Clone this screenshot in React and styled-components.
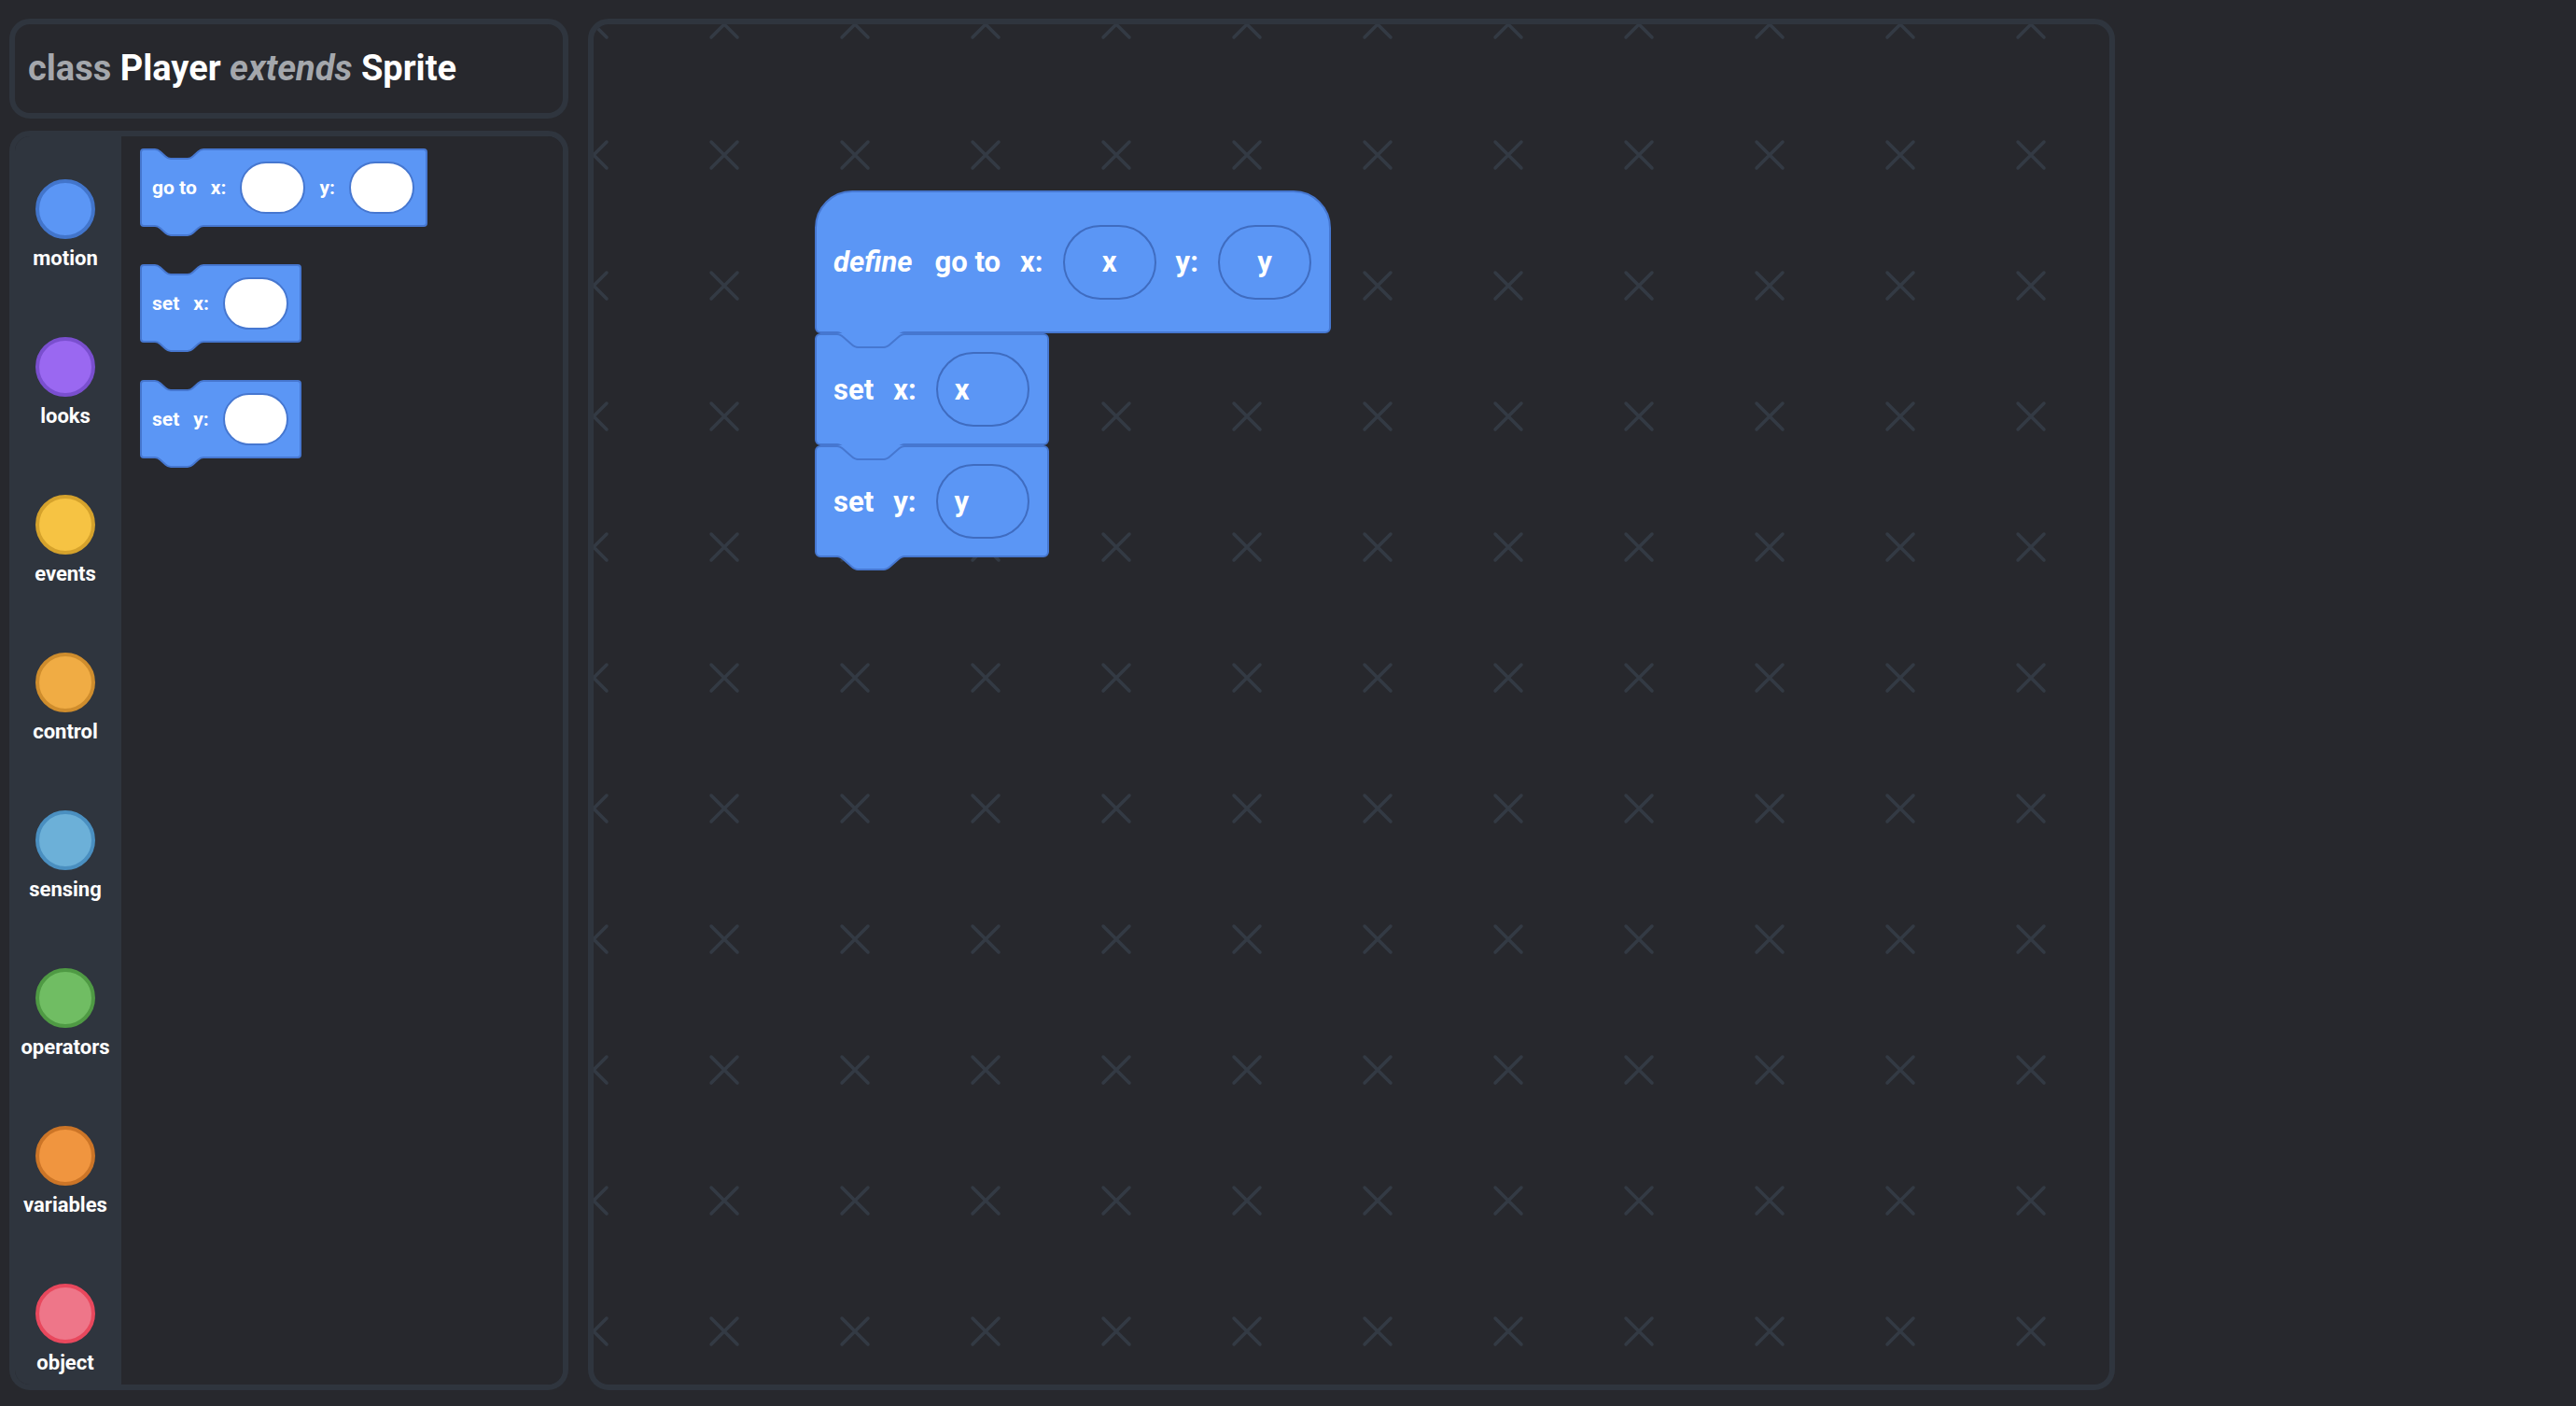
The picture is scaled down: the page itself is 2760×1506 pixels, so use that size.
import React from "react";
import styled, { createGlobalStyle } from "styled-components";

const BG = "#27282d";
const EDGE = "#2f353e";
const BLOCK = "#5b96f5";
const BLOCK_EDGE = "#4677d0";

const SIZES = {
  lg: { font: 31, gap: 21, padX: 18, padY: 18, ovalW: 100, ovalH: 80, radius: 6, notch: { x: 27, slant: 16, w: 66, d: 14 } },
  sm: { font: 21, gap: 15, padX: 11, padY: 12, ovalW: 70, ovalH: 56, radius: 4, notch: { x: 19, slant: 11, w: 46, d: 10 } },
};

const categories = [
  { name: "motion", fill: "#5b96f5", edge: "#4275cb" },
  { name: "looks", fill: "#9a68f1", edge: "#7a4fcf" },
  { name: "events", fill: "#f6c343", edge: "#d5a22c" },
  { name: "control", fill: "#f0ac44", edge: "#cf8d2d" },
  { name: "sensing", fill: "#6cb0d8", edge: "#4a8fc0" },
  { name: "operators", fill: "#70bd63", edge: "#4f9a44" },
  { name: "variables", fill: "#f0953f", edge: "#cc7527" },
  { name: "object", fill: "#ee7689", edge: "#e8485d" },
];

const GlobalStyle = createGlobalStyle`
  html, body {
    margin: 0;
    padding: 0;
    background: ${BG};
  }
  body {
    font-family: Roboto, "Liberation Sans", Arial, sans-serif;
    color: #fff;
  }
  * {
    box-sizing: border-box;
  }
`;

// notch / tab outline with rounded corners
const notchPath = (size) => {
  const n = SIZES[size].notch;
  const a = n.x;
  const b = n.x + n.slant;
  const c = n.x + n.w - n.slant;
  const d = n.x + n.w;
  const y0 = 1;
  const y1 = n.d + 1;
  const r = 3;
  const t = 0.25;
  const lerp = (p, q, k) => p + (q - p) * k;
  return [
    `M${a - r} ${y0}`,
    `Q${a} ${y0} ${lerp(a, b, t)} ${lerp(y0, y1, t)}`,
    `L${lerp(a, b, 1 - t)} ${lerp(y0, y1, 1 - t)}`,
    `Q${b} ${y1} ${b + r} ${y1}`,
    `L${c - r} ${y1}`,
    `Q${c} ${y1} ${lerp(c, d, t)} ${lerp(y1, y0, t)}`,
    `L${lerp(c, d, 1 - t)} ${lerp(y1, y0, 1 - t)}`,
    `Q${d} ${y0} ${d + r} ${y0}`,
  ].join(" ");
};

const Notch = ({ size, fill, bottom }) => {
  const n = SIZES[size].notch;
  const outline = notchPath(size);
  const right = n.x + n.w + 3;
  return (
    <NotchSvg $bottom={bottom} width={right + 2} height={n.d + 4}>
      <path d={`${outline} L${right} 0 L${n.x - 3} 0 Z`} fill={fill} />
      <path d={outline} fill="none" stroke={BLOCK_EDGE} strokeWidth="2" strokeLinejoin="round" />
    </NotchSvg>
  );
};

const Block = ({ size = "sm", hat, notchFill, children }) => (
  <BlockBody $size={size} $hat={hat}>
    {!hat && <Notch size={size} fill={notchFill} />}
    {children}
    <Notch size={size} fill={BLOCK} bottom />
  </BlockBody>
);

const App = () => {
  return (
    <>
      <GlobalStyle />
      <Page>
        <LeftColumn>
          <TitlePanel>
            <Keyword>class</Keyword>&nbsp;Player&nbsp;<Keyword $italic>extends</Keyword>&nbsp;Sprite
          </TitlePanel>

          <PalettePanel>
            <Sidebar>
              {categories.map((c) => (
                <Category key={c.name}>
                  <Dot $fill={c.fill} $edge={c.edge} />
                  <CategoryName>{c.name}</CategoryName>
                </Category>
              ))}
            </Sidebar>

            <BlockList>
              <Block notchFill={BG}>
                <Label $size="sm">go to</Label>
                <Label $size="sm">x:</Label>
                <Slot $size="sm" />
                <Label $size="sm">y:</Label>
                <Slot $size="sm" />
              </Block>
              <Block notchFill={BG}>
                <Label $size="sm">set</Label>
                <Label $size="sm">x:</Label>
                <Slot $size="sm" />
              </Block>
              <Block notchFill={BG}>
                <Label $size="sm">set</Label>
                <Label $size="sm">y:</Label>
                <Slot $size="sm" />
              </Block>
            </BlockList>
          </PalettePanel>
        </LeftColumn>

        <Canvas>
          <GridSvg>
            <defs>
              <pattern id="cross" width="140" height="140" x="-70" y="-70" patternUnits="userSpaceOnUse">
                <path d="M56 56 L84 84 M84 56 L56 84" stroke="#333a44" strokeWidth="3.4" strokeLinecap="round" />
              </pattern>
            </defs>
            <rect width="100%" height="100%" fill="url(#cross)" />
          </GridSvg>

          <Script style={{ left: 237, top: 178 }}>
            <Block size="lg" hat>
              <Label $size="lg" $italic>define</Label>
              <Label $size="lg">go to</Label>
              <Label $size="lg">x:</Label>
              <Param $size="lg" $center>x</Param>
              <Label $size="lg">y:</Label>
              <Param $size="lg" $center>y</Param>
            </Block>
            <Block size="lg" notchFill={BLOCK}>
              <Label $size="lg">set</Label>
              <Label $size="lg">x:</Label>
              <Param $size="lg">x</Param>
            </Block>
            <Block size="lg" notchFill={BLOCK}>
              <Label $size="lg">set</Label>
              <Label $size="lg">y:</Label>
              <Param $size="lg">y</Param>
            </Block>
          </Script>
        </Canvas>
      </Page>
    </>
  );
};

export default App;

const Page = styled.div`
  display: flex;
  gap: 21px;
  height: 100vh;
  padding: 20px 10px 17px;
`;

const LeftColumn = styled.div`
  width: 599px;
  display: flex;
  flex-direction: column;
  gap: 13px;
`;

const TitlePanel = styled.div`
  height: 107px;
  display: flex;
  align-items: center;
  padding: 0 14px 2px;
  border: 6px solid ${EDGE};
  border-radius: 22px;
  font-size: 38px;
  font-weight: 700;
  color: #ffffff;
  white-space: nowrap;
`;

const Keyword = styled.span`
  color: #a4a7ac;
  font-style: ${(p) => (p.$italic ? "italic" : "normal")};
`;

const PalettePanel = styled.div`
  flex: 1;
  display: flex;
  border: 6px solid ${EDGE};
  border-radius: 22px;
  overflow: hidden;
`;

const Sidebar = styled.div`
  width: 114px;
  flex-shrink: 0;
  background: ${EDGE};
  padding: 46px 6px 0 0;
  display: flex;
  flex-direction: column;
  align-items: center;
  gap: 71px;
`;

const Category = styled.div`
  display: flex;
  flex-direction: column;
  align-items: center;
  gap: 8px;
`;

const Dot = styled.div`
  width: 64px;
  height: 64px;
  border-radius: 50%;
  background: ${(p) => p.$fill};
  border: 4px solid ${(p) => p.$edge};
`;

const CategoryName = styled.div`
  font-size: 22px;
  line-height: 26px;
  font-weight: 700;
  color: #ffffff;
`;

const BlockList = styled.div`
  flex: 1;
  background: ${BG};
  padding: 13px 20px;
  display: flex;
  flex-direction: column;
  align-items: flex-start;
  gap: 40px;
`;

const Canvas = styled.div`
  width: 1636px;
  position: relative;
  border: 6px solid ${EDGE};
  border-radius: 22px;
  overflow: hidden;
  background: ${BG};
`;

const GridSvg = styled.svg`
  position: absolute;
  inset: 0;
  width: 100%;
  height: 100%;
`;

const Script = styled.div`
  position: absolute;
  display: flex;
  flex-direction: column;
  align-items: flex-start;
`;

const BlockBody = styled.div`
  position: relative;
  display: flex;
  align-items: center;
  gap: ${(p) => SIZES[p.$size].gap}px;
  padding: ${(p) => SIZES[p.$size].padY}px ${(p) => SIZES[p.$size].padX + 1}px
    ${(p) => SIZES[p.$size].padY}px ${(p) => SIZES[p.$size].padX}px;
  min-height: ${(p) => (p.$hat ? "153px" : "auto")};
  background: ${BLOCK};
  border: 2px solid ${BLOCK_EDGE};
  border-radius: ${(p) => (p.$hat ? "40px 40px 6px 6px" : `${SIZES[p.$size].radius}px`)};
  color: #ffffff;
  white-space: nowrap;
`;

const NotchSvg = styled.svg`
  position: absolute;
  left: -2px;
  top: ${(p) => (p.$bottom ? "100%" : "-2px")};
  overflow: visible;
`;

const Label = styled.span`
  font-size: ${(p) => SIZES[p.$size].font}px;
  font-weight: 700;
  font-style: ${(p) => (p.$italic ? "italic" : "normal")};
  line-height: 1;
  margin-right: ${(p) => (p.$italic ? 3 : 0)}px;
`;

const Slot = styled.span`
  width: ${(p) => SIZES[p.$size].ovalW}px;
  height: ${(p) => SIZES[p.$size].ovalH}px;
  border-radius: ${(p) => SIZES[p.$size].ovalH / 2}px;
  background: #ffffff;
  border: 2px solid ${BLOCK_EDGE};
  flex-shrink: 0;
`;

const Param = styled.span`
  width: ${(p) => SIZES[p.$size].ovalW}px;
  height: ${(p) => SIZES[p.$size].ovalH}px;
  border-radius: ${(p) => SIZES[p.$size].ovalH / 2}px;
  border: 2px solid #3f6cc0;
  display: flex;
  align-items: center;
  justify-content: ${(p) => (p.$center ? "center" : "flex-start")};
  padding-left: ${(p) => (p.$center ? 0 : 18)}px;
  font-size: ${(p) => SIZES[p.$size].font}px;
  font-weight: 700;
  flex-shrink: 0;
`;
